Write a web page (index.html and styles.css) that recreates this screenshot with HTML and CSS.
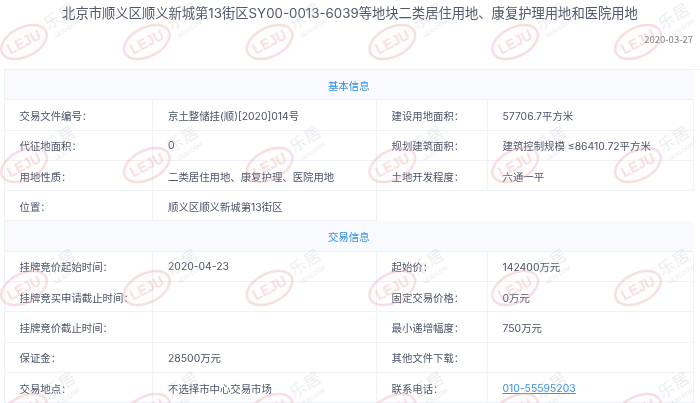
FILE: index.html
```html
<!DOCTYPE html>
<html lang="zh-CN">
<head>
<meta charset="utf-8">
<title>地块详情</title>
<link rel="stylesheet" href="styles.css">
</head>
<body>
<main class="page">
  <h1 class="title">北京市顺义区顺义新城第13街区SY00-0013-6039等地块二类居住用地、康复护理用地和医院用地</h1>
  <div class="date">2020-03-27</div>
  <section class="info">
    <div class="head">基本信息</div>
    <div class="cell">交易文件编号：</div><div class="cell val">京土整储挂(顺)[2020]014号</div><div class="cell">建设用地面积：</div><div class="cell val">57706.7平方米</div>
    <div class="cell">代征地面积：</div><div class="cell val">0</div><div class="cell">规划建筑面积：</div><div class="cell val">建筑控制规模 ≤86410.72平方米</div>
    <div class="cell">用地性质：</div><div class="cell val">二类居住用地、康复护理、医院用地</div><div class="cell">土地开发程度：</div><div class="cell val">六通一平</div>
    <div class="cell">位置：</div><div class="cell val">顺义区顺义新城第13街区</div><div class="blank"></div>
    <div class="head">交易信息</div>
    <div class="cell">挂牌竞价起始时间：</div><div class="cell val">2020-04-23</div><div class="cell">起始价：</div><div class="cell val">142400万元</div>
    <div class="cell">挂牌竞买申请截止时间：</div><div class="cell val"></div><div class="cell">固定交易价格：</div><div class="cell val">0万元</div>
    <div class="cell">挂牌竞价截止时间：</div><div class="cell val"></div><div class="cell">最小递增幅度：</div><div class="cell val">750万元</div>
    <div class="cell">保证金：</div><div class="cell val">28500万元</div><div class="cell">其他文件下载：</div><div class="cell val"></div>
    <div class="cell">交易地点：</div><div class="cell val">不选择市中心交易市场</div><div class="cell">联系电话：</div><div class="cell val"><a class="tel" href="#">010-55595203</a></div>
  </section>
</main>
<svg class="mark" width="700" height="403" aria-hidden="true">
  <defs>
    <pattern id="leju" width="122.8" height="123" patternUnits="userSpaceOnUse">
      <g transform="rotate(-27 24 42)">
        <ellipse class="ring" cx="24" cy="42" rx="24.5" ry="14.5"/>
        <text class="logo" x="24" y="47" textLength="36" lengthAdjust="spacingAndGlyphs">LEJU</text>
      </g>
      <g transform="rotate(-33 62 22)">
        <text class="cn" x="63.6" y="21.5">乐居</text>
        <text class="com" x="62.7" y="32">LEJU.COM</text>
      </g>
      <g transform="translate(122.8 0) rotate(-27 24 42)">
        <ellipse class="ring" cx="24" cy="42" rx="24.5" ry="14.5"/>
      </g>
    </pattern>
  </defs>
  <rect width="700" height="403" fill="url(#leju)"/>
</svg>
</body>
</html>
```
FILE: styles.css
```css
html, body {
  margin: 0;
  height: 403px;
  overflow: hidden;
  background: #fff;
}
body {
  position: relative;
  font-family: Inter, "Noto Sans CJK SC", "Noto Sans", sans-serif;
  color: #4a5469;
}
.page {
  padding: 4px 0 0 4px;
  filter: blur(0.3px);
}
.title {
  margin: 0 0 0 -4px;
  font-size: 13.3px;
  font-weight: 400;
  line-height: 19px;
  text-align: center;
  color: #4f586c;
  white-space: nowrap;
}
.date {
  width: 689px;
  margin-top: 10px;
  font-family: "Noto Sans CJK SC", sans-serif;
  font-size: 9.5px;
  line-height: 12px;
  text-align: right;
  color: #7d8087;
}
.info {
  margin-top: 24px;
  display: grid;
  grid-template-columns: 148px 224px 110.5px 206px;
  grid-auto-rows: 30.3px;
  border-top: 1px solid #eff1f6;
  border-left: 1px solid #eff1f6;
  font-size: 10.4px;
}
.head {
  grid-column: 1 / -1;
  display: flex;
  align-items: center;
  justify-content: center;
  padding-top: 1px;
  background: #f8faff;
  color: #2f8fe3;
  border-bottom: 1px solid #eff1f6;
  border-right: 1px solid #f8faff;
  box-sizing: border-box;
}
.cell {
  display: flex;
  align-items: center;
  padding: 1px 0 0 14.5px;
  border-right: 1px solid #eff1f6;
  border-bottom: 1px solid #eff1f6;
  white-space: nowrap;
  box-sizing: border-box;
}
.val {
  padding-left: 15px;
}
.blank {
  grid-column: span 2;
}
.tel {
  color: #3b8fe6;
  text-decoration: underline;
}
.mark {
  position: absolute;
  left: 0;
  top: 0;
  pointer-events: none;
  filter: blur(0.4px);
}
.ring {
  fill: rgba(233, 170, 170, 0.06);
  stroke: #e6a9a9;
  stroke-width: 2.4;
  opacity: 0.38;
}
.logo {
  font-family: "Liberation Sans", sans-serif;
  font-size: 15px;
  font-weight: 700;
  text-anchor: middle;
  fill: #e6a9a9;
  opacity: 0.36;
}
.cn {
  font-family: "Noto Sans CJK SC", sans-serif;
  font-size: 16px;
  text-anchor: middle;
  letter-spacing: 1px;
  fill: #b9bcc2;
  opacity: 0.3;
}
.com {
  font-family: "Liberation Sans", sans-serif;
  font-size: 5.5px;
  text-anchor: middle;
  fill: #b9bcc2;
  opacity: 0.4;
}
```
